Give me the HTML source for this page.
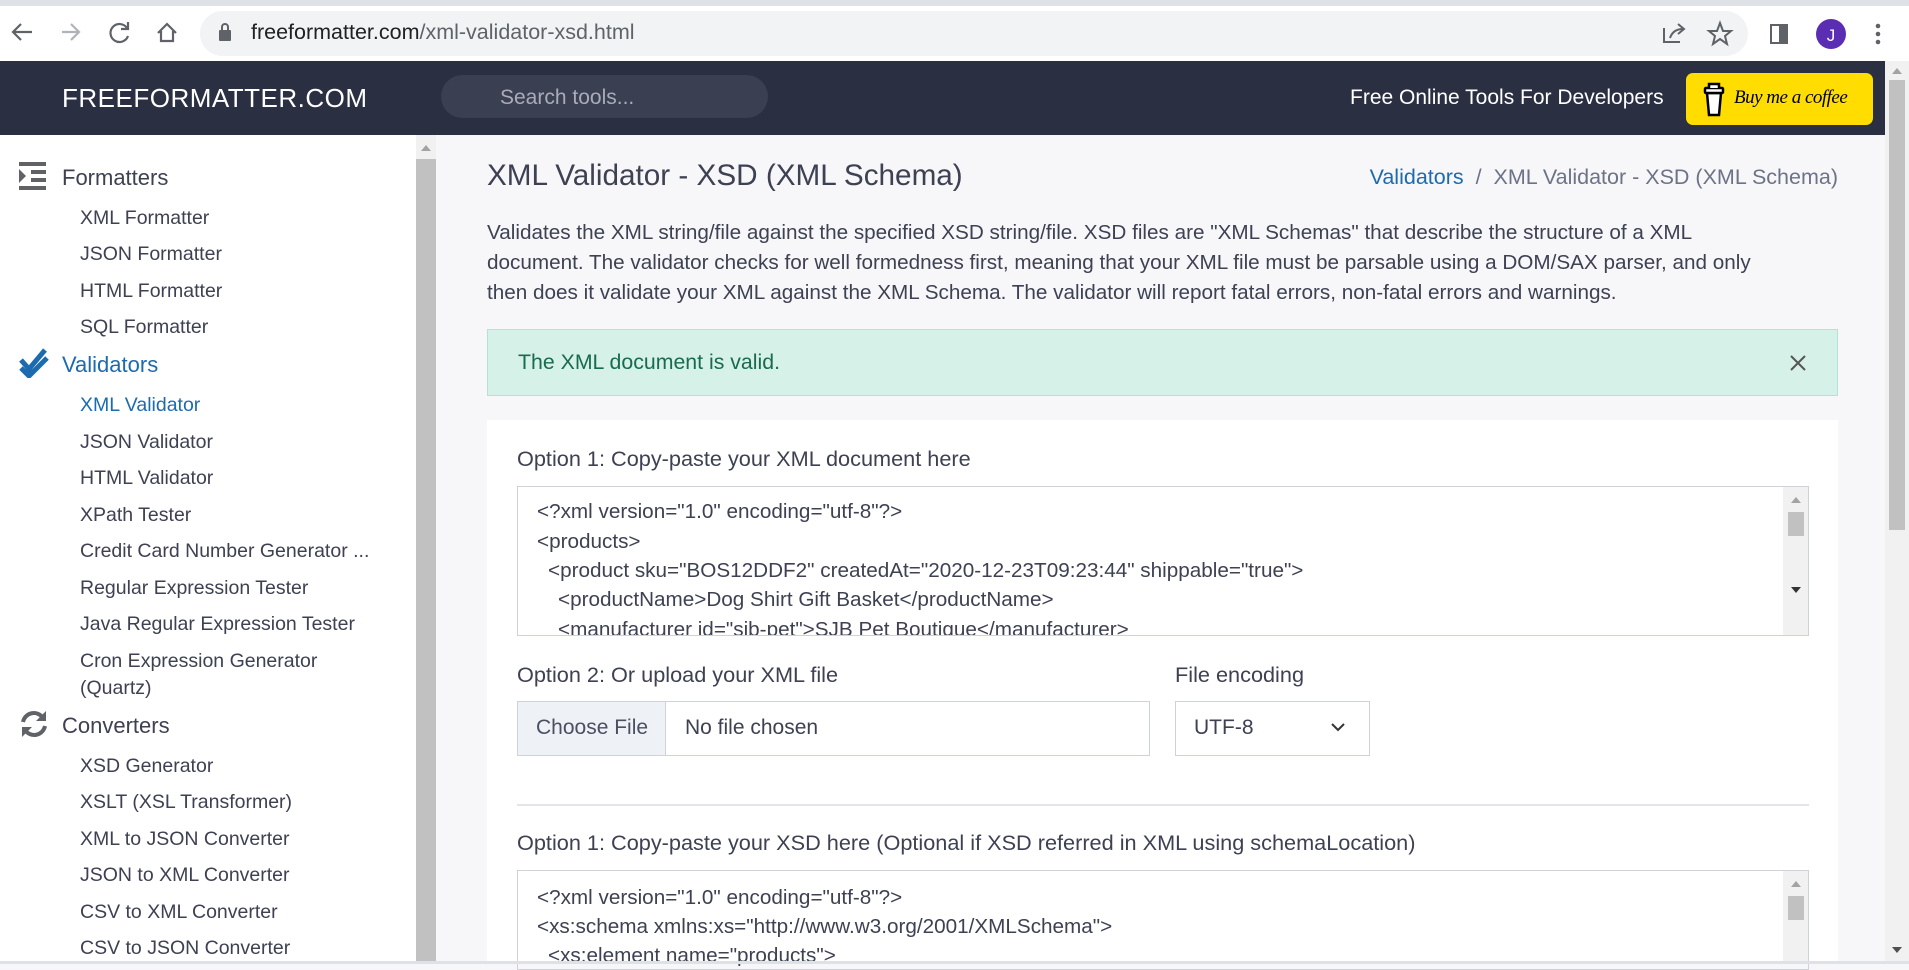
<!DOCTYPE html>
<html><head><meta charset="utf-8"><style>
*{box-sizing:border-box;margin:0;padding:0}
body{width:1909px;height:964px;overflow:hidden;font-family:"Liberation Sans",sans-serif;background:#f7f7f9;position:relative;color:#3d4152}
.abs{position:absolute;white-space:nowrap}
#tabs{left:0;top:0;width:1909px;height:6px;background:#dee1e6}
#chrome{left:0;top:6px;width:1909px;height:55px;background:#fff}
#url{left:200px;top:11px;width:1548px;height:45px;border-radius:23px;background:#f1f3f4}
#hdr{left:0;top:61px;width:1885px;height:74px;background:#2a2f42}
#side{left:0;top:135px;width:416px;height:829px;background:#fff}
#sscroll{left:416px;top:135px;width:20px;height:829px;background:#c1c1c1}
#pscroll{left:1885px;top:61px;width:24px;height:903px;background:#f1f1f1}
.si{position:absolute;left:80px;font-size:19.5px;color:#3d4152;white-space:nowrap}
.sh{position:absolute;left:62px;font-size:22px;color:#3d4152;white-space:nowrap}
.code{position:absolute;left:537px;font-size:20.7px;color:#3d4152;white-space:nowrap}
.lbl{position:absolute;font-size:21.7px;white-space:nowrap}
</style></head><body>
<div class="abs" id="tabs"></div>
<div class="abs" id="chrome"></div>
<div class="abs" id="url"></div>
<svg class="abs" style="left:0;top:6px" width="200" height="55"><g fill="none" stroke="#5f6368" stroke-width="2.2"><path d="M32 26H14M21 18l-8 8 8 8"/><path d="M62 26h16M71 18l8 8-8 8" stroke="#b0b3b8"/><path d="M127 22a9 9 0 1 0 1 8M128 16v7h-7"/><path d="M158 27l9-9 9 9M161 25v10h12V25"/></g></svg>
<svg class="abs" style="left:218px;top:22px" width="14" height="20"><rect x="1" y="8" width="12" height="11" rx="1" fill="#5f6368"/><path d="M4 8V5a3 3 0 0 1 6 0v3" stroke="#5f6368" stroke-width="2" fill="none"/></svg>
<div class="abs" style="left:251px;top:20px;font-size:21.5px;color:#202124">freeformatter.com<span style="color:#5f6368">/xml-validator-xsd.html</span></div>
<svg class="abs" style="left:1655px;top:16px" width="250" height="36"><g fill="none" stroke="#5f6368" stroke-width="2"><path d="M9 12v14h16M15 22c2-6 6-9 13-9M23 8l6 5-6 5"/><path d="M65 7l3 8h8l-6 5 2 8-7-5-7 5 2-8-6-5h8z"/><rect x="116" y="9" width="16" height="18"/></g><rect x="124" y="9" width="8" height="18" fill="#5f6368"/><circle cx="176" cy="18" r="15" fill="#5b2db3"/><text x="176" y="25" font-size="17" fill="#fff" text-anchor="middle" font-family="Liberation Sans">J</text><g fill="#5f6368"><circle cx="223" cy="10" r="2.3"/><circle cx="223" cy="18" r="2.3"/><circle cx="223" cy="26" r="2.3"/></g></svg>
<div class="abs" id="hdr"></div>
<div class="abs" style="left:62px;top:83px;font-size:26px;color:#fff;letter-spacing:0.5px">FREEFORMATTER.COM</div>
<div class="abs" style="left:441px;top:75px;width:327px;height:43px;border-radius:22px;background:#3a3f52"></div>
<div class="abs" style="left:500px;top:86px;font-size:21px;color:#a9acb8">Search tools...</div>
<div class="abs" style="left:1350px;top:86px;font-size:21px;color:#fff">Free Online Tools For Developers</div>
<div class="abs" style="left:1686px;top:73px;width:187px;height:52px;border-radius:7px;background:#ffdd00"></div>
<svg class="abs" style="left:1702px;top:81px" width="24" height="36"><g fill="#fff" stroke="#000" stroke-width="2.5"><path d="M5 12h14l-2 22H7z"/><rect x="3" y="7" width="18" height="5" rx="1"/><path d="M7 7V3h10v4"/></g></svg>
<div class="abs" style="left:1734px;top:87px;font-size:19px;color:#000;font-style:italic;font-family:'Liberation Serif',serif;letter-spacing:-0.5px">Buy me a coffee</div>
<div class="abs" id="side"></div>
<div class="abs" id="sscroll"></div>
<div class="abs" style="left:416px;top:135px;width:20px;height:24px;background:#f1f1f1"></div>
<svg class="abs" style="left:420px;top:143px" width="12" height="10"><path d="M1 8h10L6 2z" fill="#a3a3a3"/></svg>
<div class="abs" id="pscroll"></div>
<div class="abs" style="left:1889px;top:80px;width:16px;height:450px;background:#c1c1c1"></div>
<svg class="abs" style="left:1890px;top:66px" width="14" height="10"><path d="M2 8h10L7 2z" fill="#a3a3a3"/></svg>
<svg class="abs" style="left:1890px;top:945px" width="14" height="10"><path d="M2 2h10L7 8z" fill="#505050"/></svg>
<svg class="abs" style="left:19px;top:162px" width="28" height="28"><g fill="#5f6368"><rect x="0" y="0" width="27" height="4"/><rect x="12" y="8" width="15" height="4"/><rect x="12" y="16" width="15" height="4"/><rect x="0" y="24" width="27" height="4"/><path d="M0 7l7 7-7 7z"/></g></svg>
<div class="sh" style="top:165px">Formatters</div>
<div class="si" style="top:207px">XML Formatter</div>
<div class="si" style="top:243px">JSON Formatter</div>
<div class="si" style="top:280px">HTML Formatter</div>
<div class="si" style="top:316px">SQL Formatter</div>
<svg class="abs" style="left:19px;top:348px" width="32" height="30"><path d="M2 12l8 9L26 2M2 20l8 8L28 10" fill="none" stroke="#1c6bb0" stroke-width="5"/></svg>
<div class="sh" style="top:352px;color:#1c6bb0">Validators</div>
<div class="si" style="top:394px;color:#1c6bb0">XML Validator</div>
<div class="si" style="top:431px">JSON Validator</div>
<div class="si" style="top:467px">HTML Validator</div>
<div class="si" style="top:504px">XPath Tester</div>
<div class="si" style="top:540px">Credit Card Number Generator ...</div>
<div class="si" style="top:577px">Regular Expression Tester</div>
<div class="si" style="top:613px">Java Regular Expression Tester</div>
<div class="si" style="top:650px">Cron Expression Generator</div>
<div class="si" style="top:677px">(Quartz)</div>
<svg class="abs" style="left:19px;top:709px" width="30" height="30"><g fill="none" stroke="#5f6368" stroke-width="4"><path d="M4 13a11 11 0 0 1 20-4M26 17a11 11 0 0 1-20 4"/></g><path d="M27 2v10H17z M3 28V18h10z" fill="#5f6368"/></svg>
<div class="sh" style="top:713px">Converters</div>
<div class="si" style="top:755px">XSD Generator</div>
<div class="si" style="top:791px">XSLT (XSL Transformer)</div>
<div class="si" style="top:828px">XML to JSON Converter</div>
<div class="si" style="top:864px">JSON to XML Converter</div>
<div class="si" style="top:901px">CSV to XML Converter</div>
<div class="si" style="top:937px">CSV to JSON Converter</div>
<div class="abs" style="left:487px;top:159px;font-size:29.7px;color:#3d4152">XML Validator - XSD (XML Schema)</div>
<div class="abs" style="left:1300px;top:165px;font-size:21.5px;color:#6c7386;text-align:right;width:538px"><span style="color:#1c6bb0">Validators</span> &nbsp;/&nbsp; XML Validator - XSD (XML Schema)</div>
<div class="abs" style="left:487px;top:218px;font-size:20.7px;line-height:30px;color:#3d4152">Validates the XML string/file against the specified XSD string/file. XSD files are "XML Schemas" that describe the structure of a XML<br>document. The validator checks for well formedness first, meaning that your XML file must be parsable using a DOM/SAX parser, and only<br>then does it validate your XML against the XML Schema. The validator will report fatal errors, non-fatal errors and warnings.</div>
<div class="abs" style="left:487px;top:329px;width:1351px;height:67px;background:#d6f1e8;border:1px solid #b4e3d3"></div>
<div class="abs" style="left:518px;top:350px;font-size:21.3px;color:#196b4f">The XML document is valid.</div>
<svg class="abs" style="left:1790px;top:355px" width="16" height="16"><path d="M1 1l14 14M15 1L1 15" stroke="#555" stroke-width="2"/></svg>
<div class="abs" style="left:487px;top:420px;width:1351px;height:544px;background:#fff"></div>
<div class="lbl" style="left:517px;top:446px">Option 1: Copy-paste your XML document here</div>
<div class="abs" style="left:517px;top:486px;width:1292px;height:150px;border:1px solid #cfd2d8;overflow:hidden"></div>
<div class="abs" style="left:1783px;top:487px;width:25px;height:148px;background:#f1f1f1"></div>
<div class="abs" style="left:1788px;top:512px;width:16px;height:24px;background:#c1c1c1"></div>
<svg class="abs" style="left:1789px;top:495px" width="14" height="104"><path d="M2 8h10L7 2z" fill="#a3a3a3"/><path d="M2 92h10l-5 6z" fill="#333"/></svg>
<div class="code" style="top:500px">&lt;?xml version="1.0" encoding="utf-8"?&gt;</div>
<div class="code" style="top:530px">&lt;products&gt;</div>
<div class="code" style="top:559px;left:548px">&lt;product sku="BOS12DDF2" createdAt="2020-12-23T09:23:44" shippable="true"&gt;</div>
<div class="code" style="top:588px;left:558px">&lt;productName&gt;Dog Shirt Gift Basket&lt;/productName&gt;</div>
<div class="abs" style="left:518px;top:605px;width:1265px;height:30px;overflow:hidden"><div class="code" style="top:13px;left:40px">&lt;manufacturer id="sjb-pet"&gt;SJB Pet Boutique&lt;/manufacturer&gt;</div></div>
<div class="lbl" style="left:517px;top:662px">Option 2: Or upload your XML file</div>
<div class="lbl" style="left:1175px;top:662px">File encoding</div>
<div class="abs" style="left:517px;top:701px;width:633px;height:55px;border:1px solid #cfd2d8;background:#fff"></div>
<div class="abs" style="left:518px;top:702px;width:148px;height:53px;background:#eef1f6;border-right:1px solid #cfd2d8"></div>
<div class="abs" style="left:536px;top:716px;font-size:21px;color:#4a5060">Choose File</div>
<div class="abs" style="left:685px;top:716px;font-size:21px">No file chosen</div>
<div class="abs" style="left:1175px;top:701px;width:195px;height:55px;border:1px solid #cfd2d8"></div>
<div class="abs" style="left:1194px;top:716px;font-size:21px">UTF-8</div>
<svg class="abs" style="left:1330px;top:721px" width="16" height="12"><path d="M2 3l6 6 6-6" stroke="#333" stroke-width="2" fill="none"/></svg>
<div class="abs" style="left:517px;top:804px;width:1292px;height:2px;background:#e3e5ea"></div>
<div class="lbl" style="left:517px;top:830px">Option 1: Copy-paste your XSD here (Optional if XSD referred in XML using schemaLocation)</div>
<div class="abs" style="left:517px;top:870px;width:1292px;height:100px;border:1px solid #cfd2d8"></div>
<div class="abs" style="left:1783px;top:871px;width:25px;height:93px;background:#f1f1f1"></div>
<div class="abs" style="left:1788px;top:896px;width:16px;height:24px;background:#c1c1c1"></div>
<svg class="abs" style="left:1789px;top:879px" width="14" height="10"><path d="M2 8h10L7 2z" fill="#a3a3a3"/></svg>
<div class="code" style="top:886px">&lt;?xml version="1.0" encoding="utf-8"?&gt;</div>
<div class="code" style="top:915px">&lt;xs:schema xmlns:xs="http://www.w3.org/2001/XMLSchema"&gt;</div>
<div class="code" style="top:944px;left:548px">&lt;xs:element name="products"&gt;</div>
<div class="abs" style="left:0;top:961px;width:1909px;height:3px;background:#dee1e6"></div>
</body></html>
